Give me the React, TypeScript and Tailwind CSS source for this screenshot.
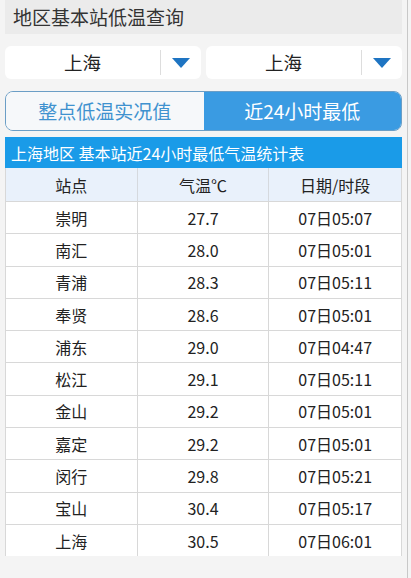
import React from "react";

const rows: [string, string, string][] = [
  ["崇明", "27.7", "07日05:07"],
  ["南汇", "28.0", "07日05:01"],
  ["青浦", "28.3", "07日05:11"],
  ["奉贤", "28.6", "07日05:01"],
  ["浦东", "29.0", "07日04:47"],
  ["松江", "29.1", "07日05:11"],
  ["金山", "29.2", "07日05:01"],
  ["嘉定", "29.2", "07日05:01"],
  ["闵行", "29.8", "07日05:21"],
  ["宝山", "30.4", "07日05:17"],
  ["上海", "30.5", "07日06:01"],
];

function Select() {
  return (
    <div className="flex-1 h-[33px] bg-white rounded-[6px] flex items-center">
      <div className="flex-1 text-center text-[18.5px] text-[#222]">上海</div>
      <div className="w-px h-[25px] bg-[#ddd]" />
      <div className="w-[40px] flex justify-center">
        <svg width="18" height="10" viewBox="0 0 18 10">
          <polygon points="0,0 18,0 9,10" fill="#1e74c2" />
        </svg>
      </div>
    </div>
  );
}

export default function App() {
  return (
    <div
      className="w-[411px] h-[578px] bg-[#f4f4f4] overflow-hidden"
      style={{ fontFamily: '"Noto Sans CJK SC", "Noto Sans", sans-serif' }}
    >
      <div className="w-[408px] h-full border-r border-[#c8c8c8] px-[5px]">
        <div className="h-[34px] bg-[#ebebeb] flex items-center pl-[8px] text-[19px] text-[#333]">
          地区基本站低温查询
        </div>
        <div className="flex gap-[5px] mt-[12px]">
          <Select />
          <Select />
        </div>
        <div className="mt-[12px] h-[40px] flex rounded-[8px] border border-[#6b9ec6] overflow-hidden">
          <div className="flex-1 bg-[#f6f8fa] flex items-center justify-center text-[19px] text-[#3f92cf]">
            整点低温实况值
          </div>
          <div className="flex-1 bg-[#3a9be2] flex items-center justify-center text-[19px] text-white">
            近24小时最低
          </div>
        </div>
        <div className="mt-[6px] h-[31px] bg-[#1a9be8] flex items-center pl-[6px] text-[16px] text-white">
          上海地区 基本站近24小时最低气温统计表
        </div>
        <div className="border-l border-r border-[#d8d8d8]">
          <div className="grid grid-cols-3 h-[33px] bg-[#e9f1fb] text-[16px] text-[#222]">
            <div className="flex items-center justify-center border-r border-[#d5d9de]">站点</div>
            <div className="flex items-center justify-center border-r border-[#d5d9de]">气温℃</div>
            <div className="flex items-center justify-center">日期/时段</div>
          </div>
          {rows.map((r, i) => (
            <div key={i} className="grid grid-cols-3 h-[32.3px] bg-white text-[16px] text-[#222] border-t border-[#d8d8d8]">
              <div className="flex items-center justify-center border-r border-[#d8d8d8]">{r[0]}</div>
              <div className="flex items-center justify-center border-r border-[#d8d8d8]">{r[1]}</div>
              <div className="flex items-center justify-center">{r[2]}</div>
            </div>
          ))}
        </div>
      </div>
    </div>
  );
}
